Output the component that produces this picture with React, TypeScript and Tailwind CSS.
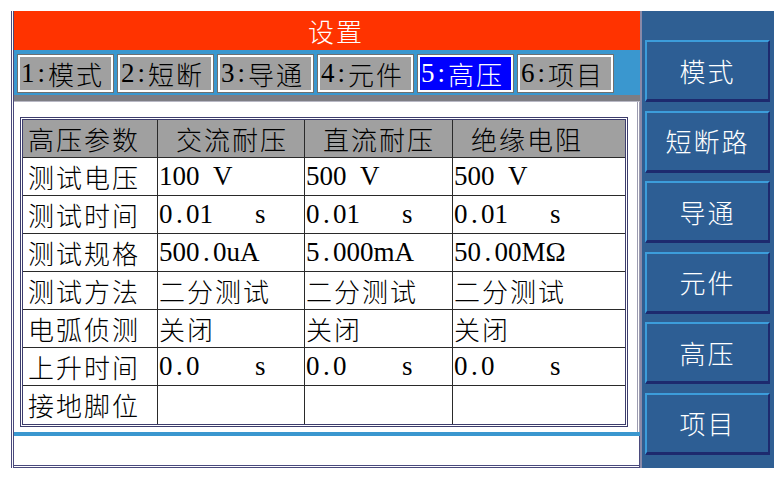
import React from 'react';

const cjk = "font-['Noto_Sans_CJK_SC',sans-serif] font-light text-[26px] tracking-[2px] leading-none";

// half-width glyph cells, like the device's bitmap font; wide letters keep their own width
function Half({ text }: { text: string }) {
  return (
    <span className="inline-flex font-['Liberation_Serif','Noto_Sans_CJK_SC',serif] text-[27px] leading-none">
      {text.split('').map((c, i) =>
        /[mAMΩ]/.test(c) ? (
          <span key={i} className="inline-block">
            {c}
          </span>
        ) : (
          <span key={i} className="inline-block w-[13.5px] text-center">
            {c === ' ' ? '\u00a0' : c}
          </span>
        )
      )}
    </span>
  );
}

function Value({ text }: { text: string }) {
  if (/[\u4e00-\u9fff]/.test(text)) return <span className={cjk}>{text}</span>;
  return <Half text={text} />;
}

export default function App() {
  const tabs = ['模式', '短断', '导通', '元件', '高压', '项目'];
  const side = ['模式', '短断路', '导通', '元件', '高压', '项目'];
  const head = ['高压参数', '交流耐压', '直流耐压', '绝缘电阻'];
  const rows = [
    ['测试电压', '100 V', '500 V', '500 V'],
    ['测试时间', '0.01   s', '0.01   s', '0.01   s'],
    ['测试规格', '500.0uA', '5.000mA', '50.00MΩ'],
    ['测试方法', '二分测试', '二分测试', '二分测试'],
    ['电弧侦测', '关闭', '关闭', '关闭'],
    ['上升时间', '0.0    s', '0.0    s', '0.0    s'],
    ['接地脚位', '', '', ''],
  ];

  return (
    <div className="flex h-[478px] w-[780px] bg-white pl-[11px] pt-[11px]">
      {/* main column */}
      <div className="flex h-[457px] w-[629px] flex-col border-l-[3px] border-double border-[#4a4a7c]">
        <div className="flex h-[39px] items-center justify-center bg-[#ff3300] pl-[18px] text-white">
          <span className={cjk}>设置</span>
        </div>

        <div className="flex h-[45px] gap-[5px] bg-[#3a97cf] pl-[4px] pt-[5px]">
          {tabs.map((t, i) => {
            const active = i === 4;
            return (
              <div
                key={t}
                className={
                  'flex h-[37px] w-[95px] items-center border-2 border-white pl-[1px] shadow-[0_0_0_1px_#6f6f6f] ' +
                  (active ? 'bg-[#0000ff] text-white' : 'bg-[#a0a0a0] text-black')
                }
              >
                <Half text={`${i + 1}:`} />
                <span className={cjk}>{t}</span>
              </div>
            );
          })}
        </div>

        <div className="h-[7px] border-b border-[#b8b8c4] bg-[#7d7d84]" />

        <div className="h-[330px] border-r-[3px] border-double border-[#9c9cb0] bg-white pl-[6px] pt-[15px]">
          <div className="w-[608px] border-[3px] border-double border-[#3c3c6c]">
            <div className="grid grid-cols-[135px_147px_148px_1fr]">
              {head.map((h, c) => (
                <div
                  key={h}
                  className={
                    'flex h-[38px] items-center border-b border-[#2a2a2a] bg-[#a0a0a0] text-black ' +
                    (c === 0 ? 'pl-[5px] ' : 'pl-[18px] ') +
                    (c < 3 ? 'border-r' : '')
                  }
                >
                  <span className={cjk}>{h}</span>
                </div>
              ))}
              {rows.map((r, ri) =>
                r.map((v, c) => (
                  <div
                    key={ri + '-' + c}
                    className={
                      'flex h-[38px] items-center border-[#2a2a2a] text-black ' +
                      (c === 0 ? 'pl-[5px] ' : 'pl-[1px] ') +
                      (c < 3 ? 'border-r ' : '') +
                      (ri < rows.length - 1 ? 'border-b' : '')
                    }
                  >
                    {c === 0 ? <span className={cjk}>{v}</span> : <Value text={v} />}
                  </div>
                ))
              )}
            </div>
          </div>
        </div>

        <div className="h-[4px] bg-[#3a97cf]" />

        <div className="flex-1 border-b-[3px] border-r border-double border-[#4a4a7c] bg-white" />
      </div>

      {/* side menu */}
      <div className="flex h-[457px] w-[134px] flex-col gap-[8.5px] border-l-2 border-[#8a8aa8] bg-[#2f5f93] pl-[3px] pt-[29px]">
        {side.map((s) => (
          <div
            key={s}
            className="flex h-[62px] w-[125px] items-center justify-center border-b-[3px] border-l-2 border-r-2 border-t-2 border-b-[#1d2a6e] border-l-[#3c9ddb] border-r-[#1d2a6e] border-t-[#3c9ddb] bg-[#2d5e94] text-white"
          >
            <span className={cjk}>{s}</span>
          </div>
        ))}
      </div>
    </div>
  );
}
